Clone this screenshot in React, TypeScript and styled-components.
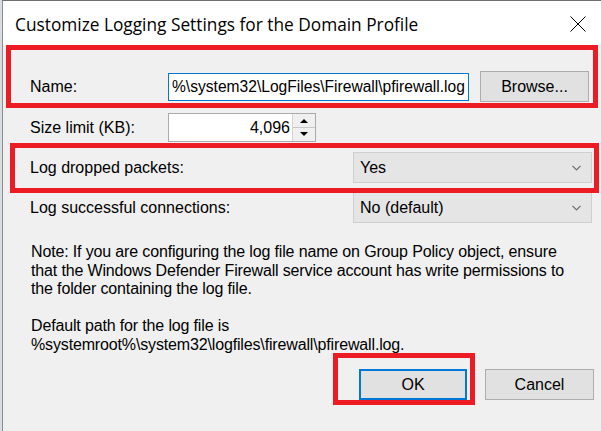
import React from "react";
import styled, { createGlobalStyle } from "styled-components";

const Global = createGlobalStyle`
  html, body { margin: 0; padding: 0; }
  body { width: 601px; height: 431px; overflow: hidden; background: #e8e8e8; }
  * { box-sizing: border-box; }
`;

const Page = styled.div`
  width: 601px;
  height: 431px;
  padding-left: 2px;
  background: #d8dde3;
  display: flex;
`;

const Window = styled.div`
  position: relative;
  flex: 1;
  display: flex;
  flex-direction: column;
  border-left: 1px solid #8c8c8c;
  border-top: 1px solid #6e6e6e;
  background: #f0f0f0;
  font-family: "Liberation Sans", Arial, sans-serif;
  color: #000;
`;

const TitleBar = styled.div`
  height: 44px;
  background: #fff;
  display: flex;
  align-items: center;
  justify-content: space-between;
  padding: 0 15px 0 12px;
`;

const Title = styled.div`
  font-family: "Open Sans", "Noto Sans", sans-serif;
  font-size: 17.3px;
  padding-top: 2px;
`;

const Close = styled.svg`
  width: 16px;
  height: 16px;
  margin-top: 2px;
`;

const Content = styled.div`
  flex: 1;
  display: flex;
  flex-direction: column;
  padding: 26px 0 0 27px;
  font-size: 16px;
`;

const Row = styled.div<{ $mt?: number; $h: number }>`
  display: flex;
  align-items: center;
  height: ${(p) => p.$h}px;
  margin-top: ${(p) => p.$mt ?? 0}px;
`;

const Label = styled.div<{ $w?: number }>`
  ${(p) => (p.$w ? `width: ${p.$w}px;` : "flex: 1;")}
  white-space: nowrap;
`;

const TextField = styled.div`
  width: 301px;
  height: 28px;
  background: #fff;
  border: 1px solid #0078d7;
  display: flex;
  align-items: center;
  padding-left: 3px;
  font-size: 15.6px;
  white-space: nowrap;
  overflow: hidden;
`;

const Button = styled.div<{ $w: number; $focus?: boolean }>`
  width: ${(p) => p.$w}px;
  height: 31px;
  background: #e1e1e1;
  border: ${(p) => (p.$focus ? "2px solid #0078d7" : "1px solid #adadad")};
  display: flex;
  align-items: center;
  justify-content: center;
  font-size: 16px;
`;

const Spinner = styled.div`
  width: 148px;
  height: 29px;
  display: flex;
  background: #fff;
  border: 1px solid #ababab;
`;

const SpinValue = styled.div`
  flex: 1;
  display: flex;
  align-items: center;
  justify-content: flex-end;
  padding-right: 2px;
`;

const SpinButtons = styled.div`
  width: 23px;
  display: flex;
  flex-direction: column;
  border-left: 1px solid #d4d4d4;
`;

const SpinBtn = styled.div<{ $bottom?: boolean }>`
  flex: 1;
  background: #f0f0f0;
  border-top: ${(p) => (p.$bottom ? "1px solid #c8c8c8" : "none")};
  display: flex;
  align-items: center;
  justify-content: center;
`;

const Select = styled.div`
  width: 239px;
  height: 31px;
  margin-right: 9px;
  background: #e5e5e5;
  border: 1px solid #cfcfcf;
  display: flex;
  align-items: center;
  justify-content: space-between;
  padding: 0 10px 0 6px;
  font-size: 16px;
`;

const Note = styled.div<{ $mt: number }>`
  margin-top: ${(p) => p.$mt}px;
  padding-left: 1px;
  font-size: 16px;
  line-height: 18.5px;
  letter-spacing: -0.15px;
  width: 570px;
`;

const Footer = styled.div`
  display: flex;
  justify-content: flex-end;
  gap: 18px;
  margin-top: 15px;
  padding-right: 7px;
`;

const Annotation = styled.div<{ $l: number; $t: number; $w: number; $h: number }>`
  position: absolute;
  left: ${(p) => p.$l - 3}px;
  top: ${(p) => p.$t - 1}px;
  width: ${(p) => p.$w}px;
  height: ${(p) => p.$h}px;
  border: 5px solid #ed1c24;
  pointer-events: none;
`;

const Chevron = () => (
  <svg width="9" height="6" viewBox="0 0 9 6">
    <path d="M0.5 0.8 L4.5 4.8 L8.5 0.8" fill="none" stroke="#6d6d6d" strokeWidth="1.2" />
  </svg>
);

const Tri = ({ up }: { up?: boolean }) => (
  <svg width="8" height="5" viewBox="0 0 8 5">
    {up ? <path d="M0 5 L4 1 L8 5 Z" fill="#000" /> : <path d="M0 0 L4 4 L8 0 Z" fill="#000" />}
  </svg>
);

export default function App() {
  return (
    <>
      <Global />
      <Page>
        <Window>
          <TitleBar>
            <Title>Customize Logging Settings for the Domain Profile</Title>
            <Close viewBox="0 0 16 16">
              <path d="M0.5 0.5 L15.5 15.5 M15.5 0.5 L0.5 15.5" stroke="#000" strokeWidth="1" fill="none" />
            </Close>
          </TitleBar>
          <Content>
            <Row $h={31}>
              <Label $w={138}>Name:</Label>
              <TextField>%\system32\LogFiles\Firewall\pfirewall.log</TextField>
              <Button $w={109} style={{ marginLeft: 11 }}>Browse...</Button>
            </Row>
            <Row $h={29} $mt={11}>
              <Label $w={138}>Size limit (KB):</Label>
              <Spinner>
                <SpinValue>4,096</SpinValue>
                <SpinButtons>
                  <SpinBtn><Tri up /></SpinBtn>
                  <SpinBtn $bottom><Tri /></SpinBtn>
                </SpinButtons>
              </Spinner>
            </Row>
            <Row $h={31} $mt={10}>
              <Label>Log dropped packets:</Label>
              <Select>
                <span>Yes</span>
                <Chevron />
              </Select>
            </Row>
            <Row $h={31} $mt={9}>
              <Label>Log successful connections:</Label>
              <Select>
                <span>No (default)</span>
                <Chevron />
              </Select>
            </Row>
            <Note $mt={20}>
              Note: If you are configuring the log file name on Group Policy object, ensure
              <br />
              that the Windows Defender Firewall service account has write permissions to
              <br />
              the folder containing the log file.
              <br />
              <br />
              Default path for the log file is
              <br />
              %systemroot%\system32\logfiles\firewall\pfirewall.log.
            </Note>
            <Footer>
              <Button $w={108} $focus>OK</Button>
              <Button $w={109}>Cancel</Button>
            </Footer>
          </Content>
          <Annotation $l={6} $t={45} $w={592} $h={63} />
          <Annotation $l={10} $t={143} $w={589} $h={50} />
          <Annotation $l={333} $t={353} $w={142} $h={52} />
        </Window>
      </Page>
    </>
  );
}
